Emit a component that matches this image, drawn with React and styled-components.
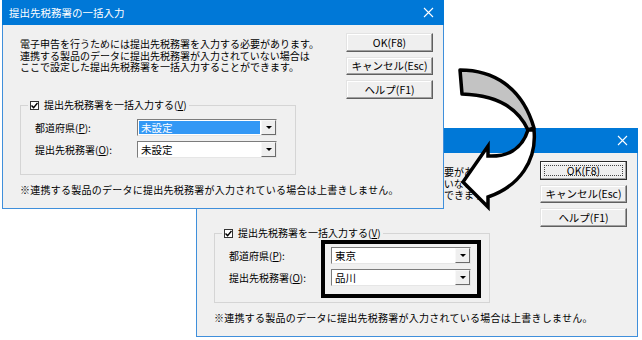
import React from "react";
import styled, { createGlobalStyle, css } from "styled-components";

const GlobalStyle = createGlobalStyle`
  html, body {
    margin: 0;
    padding: 0;
    background: #fff;
  }
  body {
    font-family: "Noto Sans CJK JP", "Noto Sans", sans-serif;
    color: #000;
  }
`;

const Desktop = styled.div`
  position: relative;
  width: 642px;
  height: 340px;
  overflow: hidden;
  background: #fff;
`;

const DialogWindow = styled.section`
  position: absolute;
  left: ${(p) => p.$x}px;
  top: ${(p) => p.$y}px;
  width: 442px;
  height: 209px;
  box-sizing: border-box;
  border: 1px solid #3f8fdb;
  border-top: none;
  background: #f0f0f0;
  display: flex;
  flex-direction: column;
`;

const TitleBar = styled.header`
  height: 25px;
  margin: 0 -1px;
  flex-shrink: 0;
  background: #0078d7;
  color: #fff;
  display: flex;
  align-items: center;
  justify-content: space-between;
  padding: 0 10px 0 7px;
  font-size: 10.5px;
`;

const CloseIcon = styled.svg`
  width: 11px;
  height: 11px;
  display: block;
`;

const Body = styled.div`
  flex: 1;
  display: flex;
  flex-direction: column;
  padding: 0 10px 0 17px;
  font-size: 10px;
  line-height: 11.5px;
`;

const TopRow = styled.div`
  display: flex;
  justify-content: space-between;
  height: 74px;
`;

const Intro = styled.p`
  margin: 13px 0 0;
  white-space: pre-line;
`;

const ButtonColumn = styled.div`
  display: flex;
  flex-direction: column;
  gap: 5px;
  margin-top: 8px;
`;

const DialogButton = styled.div`
  position: relative;
  width: 87px;
  height: 20px;
  box-sizing: border-box;
  display: flex;
  align-items: center;
  justify-content: center;
  background: #efefef;
  border: 1px solid;
  border-color: #e3e3e3 #5f5f5f #5f5f5f #e3e3e3;
  box-shadow: inset -1px -1px 0 #a0a0a0, inset 1px 1px 0 #fff;
  font-size: 10.5px;
  ${(p) =>
    p.$isDefault &&
    css`
      border-color: #2b2b2b;
      &::after {
        content: "";
        position: absolute;
        inset: 3px;
        border: 1px dotted #444;
      }
    `}
`;

const GroupBox = styled.fieldset`
  width: 276px;
  box-sizing: border-box;
  margin: 0;
  padding: 0;
  border: 1px solid #d5d5d5;
`;

const GroupLegend = styled.legend`
  margin-left: 7px;
  padding: 0 2px;
  display: flex;
  align-items: center;
  gap: 5px;
  line-height: 12px;
`;

const CheckBox = styled.span`
  width: 9px;
  height: 9px;
  box-sizing: border-box;
  border: 1px solid #333;
  background: #fff;
  display: flex;
  align-items: center;
  justify-content: center;
`;

const FieldGrid = styled.div`
  display: grid;
  grid-template-columns: 102px 140px;
  row-gap: 5px;
  align-items: center;
  padding: 8px 0 16px 14px;
`;

const FieldLabel = styled.span`
  line-height: 17px;
`;

const Underline = styled.span`
  text-decoration: underline;
`;

const ComboBox = styled.div`
  display: flex;
  height: 17px;
  box-sizing: border-box;
  border: 1px solid;
  border-color: #7c7c7c #e6e6e6 #e6e6e6 #7c7c7c;
  background: #fff;
`;

const ComboValue = styled.span`
  flex: 1;
  margin: 1px;
  padding: 0 2px;
  line-height: 13px;
  font-size: 10.5px;
  background: ${(p) => (p.$selected ? "#3398f5" : "#fff")};
  color: ${(p) => (p.$selected ? "#fff" : "#000")};
`;

const DropButton = styled.span`
  width: 15px;
  box-sizing: border-box;
  background: #efefef;
  border: 1px solid;
  border-color: #f8f8f8 #6b6b6b #6b6b6b #f8f8f8;
  display: flex;
  align-items: center;
  justify-content: center;
  &::before {
    content: "";
    border-left: 3.5px solid transparent;
    border-right: 3.5px solid transparent;
    border-top: 3.5px solid #000;
  }
`;

const Note = styled.p`
  margin: 9px 0 0 0;
  line-height: 12px;
  letter-spacing: 0.25px;
`;

const Highlight = styled.div`
  position: absolute;
  left: 124px;
  top: 112px;
  width: 160px;
  height: 58px;
  box-sizing: border-box;
  border: 4px solid #000;
`;

const Overlay = styled.svg`
  position: absolute;
  left: 0;
  top: 0;
  width: 642px;
  height: 340px;
  pointer-events: none;
`;

const introText =
  "電子申告を行うためには提出先税務署を入力する必要があります。\n連携する製品のデータに提出先税務署が入力されていない場合は\nここで設定した提出先税務署を一括入力することができます。";

function TaxOfficeDialog({ x, y, prefecture, office, selected, focused }) {
  return (
    <DialogWindow $x={x} $y={y}>
      <TitleBar>
        <span>提出先税務署の一括入力</span>
        <CloseIcon viewBox="0 0 11 11">
          <path d="M1 1 L10 10 M10 1 L1 10" stroke="#fff" strokeWidth="1.1" />
        </CloseIcon>
      </TitleBar>
      <Body>
        <TopRow>
          <Intro>{introText}</Intro>
          <ButtonColumn>
            <DialogButton $isDefault={focused}>OK(F8)</DialogButton>
            <DialogButton>キャンセル(Esc)</DialogButton>
            <DialogButton>ヘルプ(F1)</DialogButton>
          </ButtonColumn>
        </TopRow>
        <GroupBox>
          <GroupLegend>
            <CheckBox>
              <svg width="7" height="7" viewBox="0 0 7 7">
                <path d="M0.5 3.5 L2.6 5.6 L6.5 1" stroke="#000" strokeWidth="1.4" fill="none" />
              </svg>
            </CheckBox>
            <span>
              提出先税務署を一括入力する(<Underline>V</Underline>)
            </span>
          </GroupLegend>
          <FieldGrid>
            <FieldLabel>
              都道府県(<Underline>P</Underline>):
            </FieldLabel>
            <ComboBox>
              <ComboValue $selected={selected}>{prefecture}</ComboValue>
              <DropButton />
            </ComboBox>
            <FieldLabel>
              提出先税務署(<Underline>O</Underline>):
            </FieldLabel>
            <ComboBox>
              <ComboValue>{office}</ComboValue>
              <DropButton />
            </ComboBox>
          </FieldGrid>
        </GroupBox>
        <Note>※連携する製品のデータに提出先税務署が入力されている場合は上書きしません。</Note>
      </Body>
      {focused && <Highlight />}
    </DialogWindow>
  );
}

export default function App() {
  return (
    <Desktop>
      <GlobalStyle />
      <TaxOfficeDialog x={196} y={128} prefecture="東京" office="品川" focused />
      <TaxOfficeDialog x={2} y={0} prefecture="未設定" office="未設定" selected />
      <Overlay viewBox="0 0 642 340">
        <path
          d="M460 70 C492 70 522 86 534 128 L528 130 C518 108 498 95 462 94 Z"
          fill="#c3c3c3"
          stroke="#000"
          strokeWidth="3.5"
          strokeLinejoin="round"
        />
        <path
          d="M534 130 C537 160 520 186 488 197 L488 207 L463 182 L488 146 L488 156 C506 157 522 150 528 130 Z"
          fill="#fff"
          stroke="#000"
          strokeWidth="3.5"
          strokeLinejoin="miter"
        />
      </Overlay>
    </Desktop>
  );
}
